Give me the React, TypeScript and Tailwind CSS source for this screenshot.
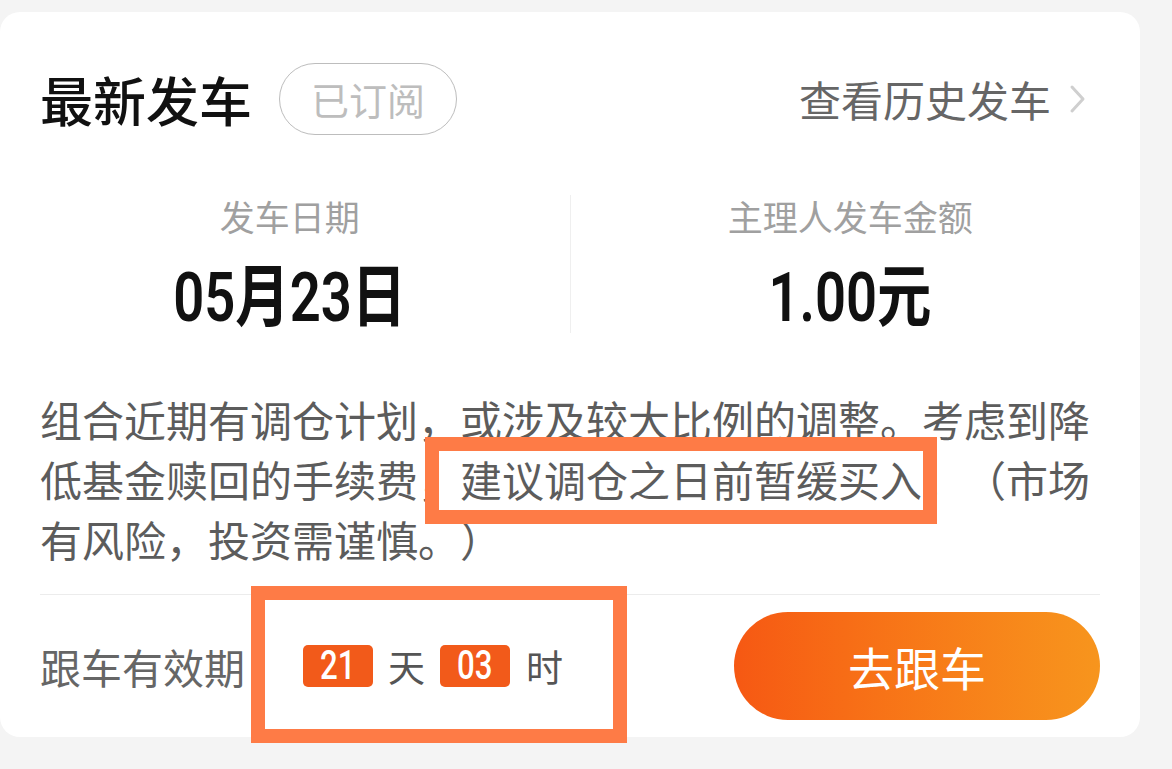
import React from 'react';

const CJK = 'font-["Noto_Sans_CJK_SC","Noto_Sans",sans-serif]';
const NUM = 'font-["Roboto","Noto_Sans_CJK_SC",sans-serif]';

export default function App() {
  return (
    <div className={`min-h-screen w-full bg-[#f4f4f4] pt-[12px] [text-spacing-trim:space-all] ${CJK}`}>
      {/* Card */}
      <div className="relative w-[1140px] h-[725px] bg-white rounded-[20px] px-[40px] pt-[51px] flex flex-col">
        {/* Header */}
        <div className="flex items-center h-[72px]">
          <h1 className="text-[53px] leading-none font-medium text-[#111]">最新发车</h1>
          <span className="ml-[27px] h-[72px] w-[178px] rounded-full border-[1.5px] border-[#bdbdbd] flex items-center justify-center text-[38px] leading-none text-[#bdbdbd]">
            已订阅
          </span>
          <div className="ml-auto flex items-center text-[42px] leading-none text-[#666]">
            <span>查看历史发车</span>
            <svg width="20" height="30" viewBox="0 0 20 30" className="ml-[16px] mr-[13px]">
              <path d="M5 3 L16 15 L5 27" fill="none" stroke="#cfcfcf" strokeWidth="3" strokeLinecap="round" strokeLinejoin="round" />
            </svg>
          </div>
        </div>

        {/* Stats */}
        <div className="mt-[60px] -mx-[30px] grid grid-cols-[1fr_auto_1fr]">
          <Stat label="发车日期" value="05月23日" />
          <div className="w-px bg-[#efefef]" />
          <Stat label="主理人发车金额" value="1.00元" />
        </div>

        {/* Notice */}
        <p className="mt-[56px] w-[1050px] text-[42px] leading-[60px] text-[#5c5c5c]">
          组合近期有调仓计划，或涉及较大比例的调整。考虑到降低基金赎回的手续费，建议调仓之日前暂缓买入。（市场有风险，投资需谨慎。）
        </p>

        <div className="mt-[25px] h-px bg-[#ececec]" />

        {/* Bottom row */}
        <div className="mt-[17px] flex items-center h-[108px]">
          <span className="text-[41px] leading-none text-[#666]">跟车有效期</span>
          <div className="ml-[58px] flex items-center text-[37px] leading-none text-[#555]">
            <TimeBox value="21" />
            <span className="ml-[15px] mr-[15px]">天</span>
            <TimeBox value="03" />
            <span className="ml-[16px]">时</span>
          </div>
          <button className="ml-auto h-[108px] w-[366px] rounded-full bg-gradient-to-r from-[#f65813] to-[#f7951d] text-white text-[46px] leading-none flex items-center justify-center">
            去跟车
          </button>
        </div>

        {/* Annotation boxes */}
        <div className="absolute left-[425px] top-[425px] w-[512px] h-[87px] border-[14px] border-[#fe7b46]" />
        <div className="absolute left-[251px] top-[574px] w-[376px] h-[157px] border-[14px] border-[#fe7b46]" />
      </div>
    </div>
  );
}

function Stat({ label, value }: { label: string; value: string }) {
  return (
    <div className="flex flex-col items-center">
      <span className="text-[35px] leading-[42px] text-[#a0a0a0]">{label}</span>
      <span className={`mt-[26px] inline-block text-[68px] leading-[70px] font-semibold text-[#111] scale-x-[0.8] ${NUM}`}>
        {value}
      </span>
    </div>
  );
}

function TimeBox({ value }: { value: string }) {
  return (
    <span className="w-[70px] h-[42px] rounded-[5px] bg-[#f25a1a] flex items-center justify-center">
      <span className={`inline-block text-[40px] leading-none font-medium text-white scale-x-[0.78] ${NUM}`}>{value}</span>
    </span>
  );
}
